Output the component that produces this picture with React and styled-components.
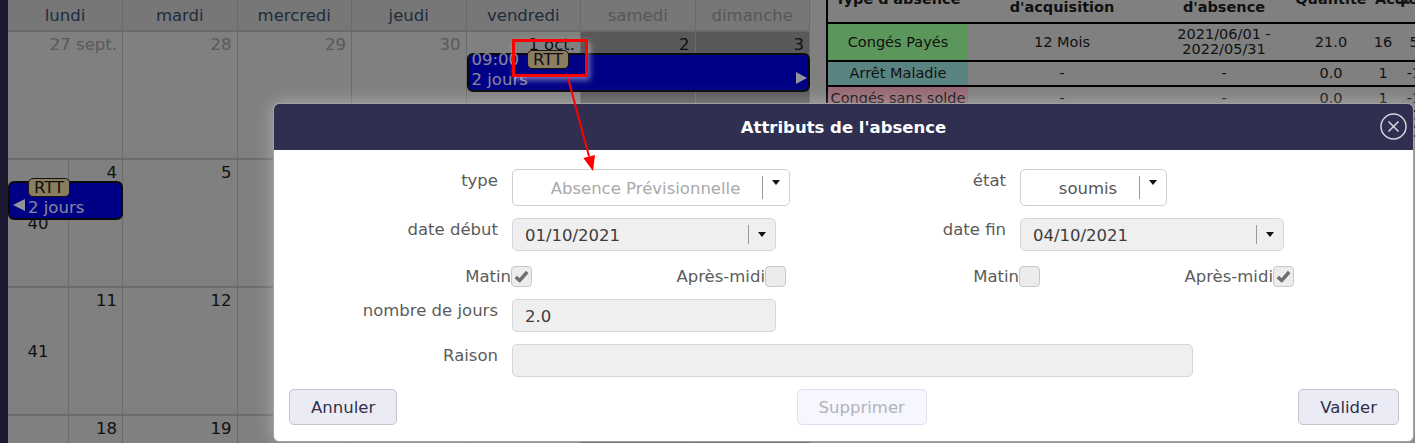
import React from 'react';
import styled, { createGlobalStyle } from 'styled-components';

const GlobalStyle = createGlobalStyle`
    * { box-sizing: border-box; }
    html, body {
        margin: 0;
        padding: 0;
        overflow: hidden;
    }
    body {
        font-family: "DejaVu Sans", Verdana, sans-serif;
        font-size: 16.5px;
        color: #1c1c1c;
        background: #d5d5d5;
    }
`;

const Screen = styled.div`
    position: relative;
    width: 1415px;
    height: 443px;
    overflow: hidden;
    background: #d5d5d5;
`;

const Page = styled.div`
    display: flex;
    height: 100%;
`;

const Sidebar = styled.aside`
    flex: 0 0 8px;
    background: #2d2850;
`;

// ---- calendar ----
const Calendar = styled.section`
    flex: 0 0 802px;
    display: flex;
    flex-direction: column;
`;

const HeadRow = styled.div`
    flex: 0 0 32px;
    display: grid;
    grid-template-columns: 115px repeat(6, 1fr);
    background: #c6c6c6;
    border-bottom: 2px solid #b3b3b3;
`;

const HeadCell = styled.div`
    display: flex;
    align-items: center;
    justify-content: center;
    border-right: 1px solid #b3b3b3;
    color: ${p => (p.$weekend ? '#929292' : '#344b66')};
`;

const WeekRow = styled.div`
    flex: 0 0 128px;
    display: grid;
    grid-template-columns: 61px 54px repeat(6, 1fr);
    grid-template-rows: 126px;
    border-bottom: 2px solid #b3b3b3;
`;

const WeekNum = styled.div`
    grid-row: 1;
    grid-column: 1;
    display: flex;
    align-items: center;
    justify-content: center;
    border-right: 1px solid #b3b3b3;
`;

const DayCell = styled.div`
    grid-row: 1;
    grid-column: ${p => p.$col};
    padding: 3px 5px 0;
    text-align: right;
    white-space: nowrap;
    border-right: 1px solid #b3b3b3;
    background: ${p => (p.$weekend ? '#949494' : '#d5d5d5')};
    color: ${p => (p.$other ? '#969696' : '#1c1c1c')};
`;

const EventBar = styled.div`
    grid-row: 1;
    grid-column: ${p => p.$span};
    align-self: start;
    position: relative;
    height: 39px;
    margin-top: 21px;
    padding-left: ${p => p.$inset}px;
    background: #0000e0;
    border: 2px solid #111;
    border-radius: 6px;
    color: #e0e0ff;
    line-height: 20px;
    white-space: nowrap;
`;

const EventLines = styled.div`
    margin-top: -5px;
`;

const EventTime = styled.span`
    margin-right: 8px;
`;

const Badge = styled.span`
    display: inline-block;
    vertical-align: top;
    padding: 0 5px;
    line-height: 17px;
    background: #e8d0a0;
    color: #1c1c1c;
    border: 1px solid #222;
    border-radius: 5px;
`;

const EventArrow = styled.span`
    position: absolute;
    top: ${p => (p.$dir === 'left' ? 16 : 17)}px;
    ${p => (p.$dir === 'left' ? 'left: 3px;' : 'right: 1px;')}
    width: 0;
    height: 0;
    border-top: 6px solid transparent;
    border-bottom: 6px solid transparent;
    ${p => (p.$dir === 'left'
        ? 'border-right: 12px solid #f4f4ff;'
        : 'border-left: 11px solid #f4f4ff;')}
`;

// ---- summary table ----
const Panel = styled.section`
    flex: 0 0 auto;
    margin-left: 16px;
`;

const Summary = styled.table`
    width: 606px;
    margin-top: -24px;
    table-layout: fixed;
    border-collapse: separate;
    border-spacing: 0;
    font-size: 14.5px;
    color: #1c1c1c;
`;

const Th = styled.th`
    height: 48px;
    padding: 0 ${p => (p.$align === 'left' ? '0 0 5px' : '2px')};
    font-weight: bold;
    line-height: 17px;
    white-space: nowrap;
    text-align: ${p => p.$align || 'center'};
    border-bottom: 2px solid #000;
    &:first-child { border-left: 2px solid #000; }
`;

const Td = styled.td`
    padding: 3px 2px;
    line-height: ${p => (p.$tight ? 15 : 17)}px;
    text-align: center;
    white-space: nowrap;
    background: ${p => p.$bg || 'transparent'};
    border-bottom: 2px solid #000;
    &:first-child { border-left: 2px solid #000; }
`;

// ---- dialog ----
const Backdrop = styled.div`
    position: absolute;
    inset: 0;
    background: rgba(0, 0, 0, 0.4);
`;

const Dialog = styled.div`
    position: absolute;
    left: 273px;
    top: 103px;
    width: 1141px;
    height: 339px;
    display: flex;
    flex-direction: column;
    background: #fff;
    border: 1px solid #a0a0a0;
    border-radius: 6px;
    overflow: hidden;
    box-shadow: 0 0 18px rgba(255, 255, 255, 0.35);
`;

const DialogHeader = styled.header`
    position: relative;
    flex: 0 0 46px;
    display: flex;
    align-items: center;
    justify-content: center;
    background: #302f50;
    color: #fff;
    font-weight: bold;
`;

const CloseButton = styled.button`
    position: absolute;
    right: 6px;
    top: 9px;
    display: flex;
    width: 27px;
    height: 27px;
    padding: 0;
    border: 0;
    background: none;
`;

const DialogBody = styled.div`
    flex: 1;
    display: flex;
    flex-direction: column;
    gap: 12px;
    padding: 19px 14px 17px 4px;
`;

const FieldRow = styled.div`
    display: flex;
`;

const FieldGroup = styled.div`
    display: grid;
    grid-template-columns: 220px ${p => p.$field || 274}px;
    column-gap: 14px;
    align-items: start;
    width: ${p => (p.$field ? 'auto' : '508px')};
`;

const Label = styled.label`
    padding-top: 2px;
    text-align: right;
    color: #5b5b5b;
    white-space: nowrap;
`;

const Field = styled.div`
    display: flex;
    width: ${p => p.$w}px;
    height: ${p => (p.$select ? 37 : 33)}px;
    background: ${p => (p.$select ? '#fff' : '#efefef')};
    border: 1px solid ${p => (p.$select ? '#cfcfcf' : '#d6d6d6')};
    border-radius: 5px;
`;

const FieldValue = styled.span`
    flex: 1;
    display: flex;
    align-items: center;
    justify-content: ${p => (p.$centered ? 'center' : 'flex-start')};
    padding: 2px 0 0 ${p => (p.$centered ? 16 : 12)}px;
    white-space: nowrap;
    color: ${p => p.$color || '#3c3c3c'};
`;

const CaretBox = styled.span`
    flex: 0 0 27px;
    display: flex;
    align-items: ${p => (p.$high ? 'flex-start' : 'center')};
    justify-content: center;
    margin: 6px 0;
    padding-top: ${p => (p.$high ? 4 : 0)}px;
    border-left: 1px solid #9a9a9a;
    &::after {
        content: '';
        border-left: 4px solid transparent;
        border-right: 4px solid transparent;
        border-top: 5px solid #111;
    }
`;

const CheckRow = styled.div`
    display: grid;
    grid-template-columns: repeat(4, 254px);
    height: 24px;
    padding-top: 3px;
`;

const CheckItem = styled.label`
    display: flex;
    align-items: center;
    justify-content: flex-end;
    color: #5b5b5b;
`;

const CheckBox = styled.span`
    display: flex;
    align-items: center;
    justify-content: center;
    width: 21px;
    height: 21px;
    background: #ececec;
    border: 1px solid #c8c8c8;
    border-radius: 4px;
`;

const ButtonRow = styled.div`
    display: flex;
    align-items: center;
    justify-content: space-between;
    padding-left: 11px;
`;

const Button = styled.button`
    height: 36px;
    padding: 0 21px;
    margin-left: ${p => p.$shift || 0}px;
    font: inherit;
    color: ${p => (p.disabled ? '#b2b2ba' : '#2f3148')};
    background: ${p => (p.disabled ? '#f6f6fe' : '#ebebf5')};
    border: 1px solid ${p => (p.disabled ? '#dedef0' : '#c4c4cc')};
    border-radius: 5px;
`;

// ---- annotation ----
const Highlight = styled.div`
    position: absolute;
    left: 512px;
    top: 39px;
    width: 76px;
    height: 38px;
    border: 3px solid #ff0000;
    box-shadow: 2px 3px 6px rgba(255, 255, 255, 0.45);
`;

const Pointer = styled.svg`
    position: absolute;
    left: 560px;
    top: 75px;
    overflow: visible;
`;

const dayNames = ['lundi', 'mardi', 'mercredi', 'jeudi', 'vendredi', 'samedi', 'dimanche'];

const weeks = [
    {
        num: null,
        days: ['27 sept.', '28', '29', '30', '1 oct.', '2', '3'],
        other: 4,
        event: { span: '6 / 9', inset: 3, time: '09:00', arrow: 'right' },
    },
    { num: 40, days: ['4', '5', '6', '7', '8', '9', '10'], event: { span: '1 / 3', inset: 18, arrow: 'left' } },
    { num: 41, days: ['11', '12', '13', '14', '15', '16', '17'] },
    { num: 42, days: ['18', '19', '20', '21', '22', '23', '24'] },
];

const balances = [
    { type: 'Congés Payés', bg: '#98fb98', acq: '12 Mois', period: ['2021/06/01 -', '2022/05/31'], qty: '21.0', taken: '16', left: '5' },
    { type: 'Arrêt Maladie', bg: '#96dcd8', acq: '-', period: ['-'], qty: '0.0', taken: '1', left: '-1' },
    { type: 'Congés sans solde', bg: '#f8b0c0', acq: '-', period: ['-'], qty: '0.0', taken: '1', left: '-1' },
    { type: 'Absence Prévisionnelle', bg: '#ffe9b0', acq: '-', period: ['-'], qty: '0.0', taken: '2', left: '-2' },
];

function CheckMark() {
    return (
        <svg width="15" height="13" viewBox="0 0 15 13">
            <path d="M1.8 7 L5.6 10.6 L13.2 2" fill="none" stroke="#6e6e6e" strokeWidth="3.4" strokeLinejoin="round" />
        </svg>
    );
}

function Check({ label, checked }) {
    return (
        <CheckItem>
            {label}
            <CheckBox>{checked && <CheckMark />}</CheckBox>
        </CheckItem>
    );
}

function Week({ week }) {
    const { num, days, other = 0, event } = week;
    return (
        <WeekRow>
            {num && <WeekNum>{num}</WeekNum>}
            {days.map((d, i) => {
                const col = i === 0 ? (num ? '2' : '1 / 3') : String(i + 2);
                return (
                    <DayCell key={d} $col={col} $weekend={i > 4} $other={i < other}>
                        {d}
                    </DayCell>
                );
            })}
            {event && (
                <EventBar $span={event.span} $inset={event.inset}>
                    <EventLines>
                        <div>
                            {event.time && <EventTime>{event.time}</EventTime>}
                            <Badge>RTT</Badge>
                        </div>
                        <div>2 jours</div>
                    </EventLines>
                    <EventArrow $dir={event.arrow} />
                </EventBar>
            )}
        </WeekRow>
    );
}

export default function App() {
    return (
        <Screen>
            <GlobalStyle />
            <Page>
                <Sidebar />
                <Calendar>
                    <HeadRow>
                        {dayNames.map((d, i) => (
                            <HeadCell key={d} $weekend={i > 4}>{d}</HeadCell>
                        ))}
                    </HeadRow>
                    {weeks.map(w => <Week key={w.days[0]} week={w} />)}
                </Calendar>
                <Panel>
                    <Summary>
                        <colgroup>
                            <col style={{ width: 142 }} />
                            <col style={{ width: 188 }} />
                            <col style={{ width: 136 }} />
                            <col style={{ width: 78 }} />
                            <col style={{ width: 26 }} />
                            <col style={{ width: 36 }} />
                        </colgroup>
                        <thead>
                            <tr>
                                <Th>Type d'absence</Th>
                                <Th>Période<br />d'acquisition</Th>
                                <Th>Période<br />d'absence</Th>
                                <Th>Quantité</Th>
                                <Th $align="left">Acq.</Th>
                                <Th>Solde</Th>
                            </tr>
                        </thead>
                        <tbody>
                            {balances.map(b => (
                                <tr key={b.type}>
                                    <Td $bg={b.bg}>{b.type}</Td>
                                    <Td>{b.acq}</Td>
                                    <Td $tight={b.period.length > 1}>
                                        {b.period.map((p, i) => (
                                            <React.Fragment key={p}>{i > 0 && <br />}{p}</React.Fragment>
                                        ))}
                                    </Td>
                                    <Td>{b.qty}</Td>
                                    <Td>{b.taken}</Td>
                                    <Td>{b.left}</Td>
                                </tr>
                            ))}
                        </tbody>
                    </Summary>
                </Panel>
            </Page>

            <Backdrop />

            <Dialog>
                <DialogHeader>
                    Attributs de l'absence
                    <CloseButton aria-label="Fermer">
                        <svg width="27" height="27" viewBox="0 0 27 27">
                            <circle cx="13.5" cy="13.5" r="12.5" fill="none" stroke="#d4d4de" strokeWidth="1.5" />
                            <path d="M8.5 8.5 L18.5 18.5 M18.5 8.5 L8.5 18.5" stroke="#d4d4de" strokeWidth="1.6" />
                        </svg>
                    </CloseButton>
                </DialogHeader>
                <DialogBody>
                    <FieldRow>
                        <FieldGroup>
                            <Label>type</Label>
                            <Field $select $w={278}>
                                <FieldValue $centered $color="#a9a9a9">Absence Prévisionnelle</FieldValue>
                                <CaretBox $high />
                            </Field>
                        </FieldGroup>
                        <FieldGroup>
                            <Label>état</Label>
                            <Field $select $w={147}>
                                <FieldValue $centered $color="#555">soumis</FieldValue>
                                <CaretBox $high />
                            </Field>
                        </FieldGroup>
                    </FieldRow>
                    <FieldRow>
                        <FieldGroup>
                            <Label>date début</Label>
                            <Field $w={264}>
                                <FieldValue>01/10/2021</FieldValue>
                                <CaretBox />
                            </Field>
                        </FieldGroup>
                        <FieldGroup>
                            <Label>date fin</Label>
                            <Field $w={264}>
                                <FieldValue>04/10/2021</FieldValue>
                                <CaretBox />
                            </Field>
                        </FieldGroup>
                    </FieldRow>
                    <CheckRow>
                        <Check label="Matin" checked />
                        <Check label="Après-midi" />
                        <Check label="Matin" />
                        <Check label="Après-midi" checked />
                    </CheckRow>
                    <FieldRow>
                        <FieldGroup>
                            <Label>nombre de jours</Label>
                            <Field $w={264}>
                                <FieldValue>2.0</FieldValue>
                            </Field>
                        </FieldGroup>
                    </FieldRow>
                    <FieldRow>
                        <FieldGroup $field={681}>
                            <Label>Raison</Label>
                            <Field $w={681} />
                        </FieldGroup>
                    </FieldRow>
                    <ButtonRow>
                        <Button>Annuler</Button>
                        <Button disabled $shift={28}>Supprimer</Button>
                        <Button>Valider</Button>
                    </ButtonRow>
                </DialogBody>
            </Dialog>

            <Highlight />
            <Pointer width="40" height="100">
                <line x1="8" y1="3" x2="29.1" y2="81.5" stroke="#ff0000" strokeWidth="2" />
                <polygon points="33,96 23.3,83.1 35.0,79.9" fill="#ff0000" />
            </Pointer>
        </Screen>
    );
}
